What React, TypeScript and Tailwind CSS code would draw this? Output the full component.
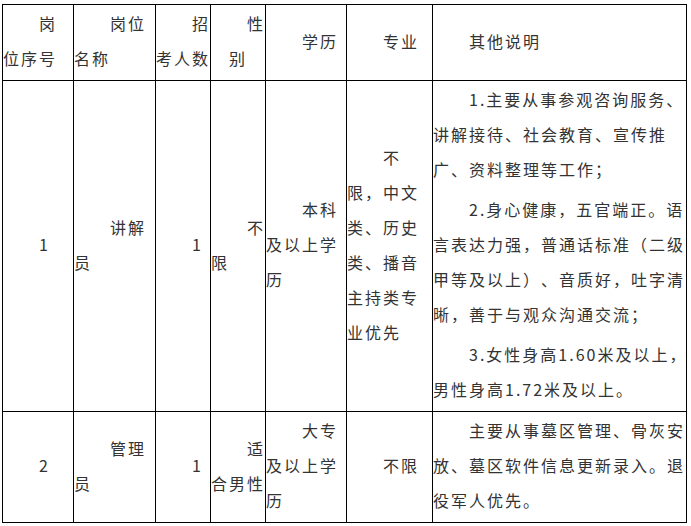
type Line = [number, string]
type Cell = Line[][]

const indent: Record<number, string> = {
  0: "",
  18: "pl-[18px]",
  36: "pl-[36px]",
}

const rows: Cell[][] = [
  [
    [[[36, "岗"], [0, "位序号"]]],
    [[[36, "岗位"], [0, "名称"]]],
    [[[36, "招"], [0, "考人数"]]],
    [[[36, "性"], [18, "别"]]],
    [[[36, "学历"]]],
    [[[36, "专业"]]],
    [[[36, "其他说明"]]],
  ],
  [
    [[[36, "1"]]],
    [[[36, "讲解"], [0, "员"]]],
    [[[36, "1"]]],
    [[[36, "不"], [0, "限"]]],
    [[[36, "本科"], [0, "及以上学"], [0, "历"]]],
    [[[36, "不"], [0, "限，中文"], [0, "类、历史"], [0, "类、播音"], [0, "主持类专"], [0, "业优先"]]],
    [
      [[36, "1.主要从事参观咨询服务、"], [0, "讲解接待、社会教育、宣传推"], [0, "广、资料整理等工作；"]],
      [
        [36, "2.身心健康，五官端正。语"],
        [0, "言表达力强，普通话标准（二级"],
        [0, "甲等及以上）、音质好，吐字清"],
        [0, "晰，善于与观众沟通交流；"],
      ],
      [[36, "3.女性身高1.60米及以上，"], [0, "男性身高1.72米及以上。"]],
    ],
  ],
  [
    [[[36, "2"]]],
    [[[36, "管理"], [0, "员"]]],
    [[[36, "1"]]],
    [[[36, "适"], [0, "合男性"]]],
    [[[36, "大专"], [0, "及以上学"], [0, "历"]]],
    [[[36, "不限"]]],
    [[[36, "主要从事墓区管理、骨灰安"], [0, "放、墓区软件信息更新录入。退"], [0, "役军人优先。"]]],
  ],
]

function TableCell({ cell }: { cell: Cell }) {
  return (
    <div className="flex flex-col justify-center gap-[5px] border-l border-t border-black pt-[1px] pb-[4px]">
      {cell.map((para, i) => (
        <div key={i}>
          {para.map(([ind, text], j) => (
            <div key={j} className={`whitespace-nowrap ${indent[ind]}`}>
              {text}
            </div>
          ))}
        </div>
      ))}
    </div>
  )
}

export default function App() {
  return (
    <div className="min-h-screen bg-white pt-[4px] pl-[2px]">
      <div className="grid w-fit grid-cols-[71px_82px_55px_55px_81px_86px_254px] border-r border-b border-black font-['Noto_Sans_CJK_SC','Noto_Sans',sans-serif] text-[16px] leading-[35px] tracking-[2px] text-[#333] [text-spacing-trim:space-all]">
        {rows.map((row, r) => row.map((cell, c) => <TableCell key={`${r}-${c}`} cell={cell} />))}
      </div>
    </div>
  )
}
